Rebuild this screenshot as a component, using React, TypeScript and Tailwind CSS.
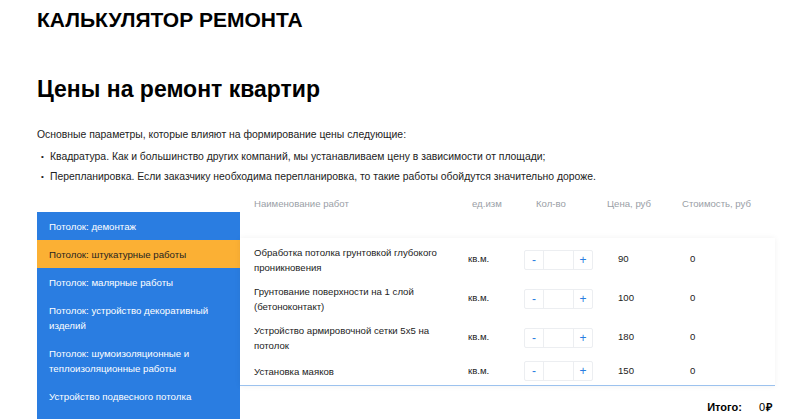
import { useState } from "react";

interface WorkRow {
  name: string;
  unit: string;
  price: number;
  tall: boolean;
}

const categories = [
  "Потолок: демонтаж",
  "Потолок: штукатурные работы",
  "Потолок: малярные работы",
  "Потолок: устройство декоративный изделий",
  "Потолок: шумоизоляционные и теплоизоляционные работы",
  "Устройство подвесного потолка",
];

const rows: WorkRow[] = [
  { name: "Обработка потолка грунтовкой глубокого проникновения", unit: "кв.м.", price: 90, tall: true },
  { name: "Грунтование поверхности на 1 слой (бетоноконтакт)", unit: "кв.м.", price: 100, tall: true },
  { name: "Устройство армировочной сетки 5х5 на потолок", unit: "кв.м.", price: 180, tall: true },
  { name: "Установка маяков", unit: "кв.м.", price: 150, tall: false },
];

function Counter() {
  return (
    <div className="flex h-[20px] w-[69px] border border-[#eceef1] rounded-[2px] text-[#2a7de1] text-[12px] leading-none">
      <button className="w-[19px] flex items-center justify-center border-r border-[#eceef1]">-</button>
      <input className="w-[29px] flex-1 outline-none" />
      <button className="w-[19px] flex items-center justify-center border-l border-[#eceef1]">+</button>
    </div>
  );
}

export default function App() {
  const [active] = useState(1);

  return (
    <div className="w-[800px] h-[419px] overflow-hidden bg-white text-black font-['Liberation_Sans',Arial,sans-serif] pl-[37px]">
      <h1 className="pt-[8px] text-[21px] leading-[24px] font-bold">КАЛЬКУЛЯТОР РЕМОНТА</h1>
      <h2 className="mt-[42px] text-[23px] leading-[30px] font-bold">Цены на ремонт квартир</h2>

      <div className="mt-[21px] text-[10.4px] leading-[20px] text-[#222]">
        <p>Основные параметры, которые влияют на формирование цены следующие:</p>
        <ul className="mt-[2px]">
          <li className="flex items-center">
            <span className="ml-[4px] w-[9px] text-[8px]">•</span>
            Квадратура. Как и большинство других компаний, мы устанавливаем цену в зависимости от площади;
          </li>
          <li className="flex items-center">
            <span className="ml-[4px] w-[9px] text-[8px]">•</span>
            Перепланировка. Если заказчику необходима перепланировка, то такие работы обойдутся значительно дороже.
          </li>
        </ul>
      </div>

      <div className="mt-[7px] flex w-[738px]">
        <div className="mt-[18px] w-[203px] shrink-0 self-start bg-[#2a7de1] pb-[24px]">
          {categories.map((c, i) => (
            <div
              key={c}
              className={
                i === active
                  ? "px-[12px] py-[6.5px] text-[9.7px] leading-[15px] bg-[#fbb034] text-[#1f1f1f]"
                  : "px-[12px] py-[6.5px] text-[9.7px] leading-[15px] text-white"
              }
            >
              {c}
            </div>
          ))}
        </div>

        <div className="flex-1 flex flex-col">
          <div className="flex h-[20px] items-center text-[9.6px] text-[#9aa0a6]">
            <div className="w-[214px] pl-[14px]">Наименование работ</div>
            <div className="w-[66px] pl-[18px]">ед.изм</div>
            <div className="w-[76px] pl-[16px]">Кол-во</div>
            <div className="w-[74px] pl-[11px]">Цена, руб</div>
            <div className="flex-1 pl-[12px]">Стоимость, руб</div>
          </div>

          <div className="mt-[24px] pt-[2px] border-b border-[#9cc2ee] shadow-[0_0_6px_rgba(0,0,0,0.06)]">
            {rows.map((r) => (
              <div
                key={r.name}
                className={
                  r.tall
                    ? "flex h-[39px] items-center text-[9.6px] text-[#222]"
                    : "flex h-[28px] items-center text-[9.6px] text-[#222]"
                }
              >
                <div className="w-[214px] pl-[14px] pr-[10px] leading-[15px]">{r.name}</div>
                <div className="w-[70px] pl-[14px]">{r.unit}</div>
                <div className="w-[94px]">
                  <Counter />
                </div>
                <div className="w-[72px]">{r.price}</div>
                <div className="flex-1">0</div>
              </div>
            ))}
          </div>

          <div className="flex justify-end items-center h-[42px] pr-[3px] text-[11px]">
            <span className="font-bold">Итого:</span>
            <span className="ml-[17px]">0</span>
            <span className="ml-[1px] font-bold">₽</span>
          </div>
        </div>
      </div>
    </div>
  );
}
